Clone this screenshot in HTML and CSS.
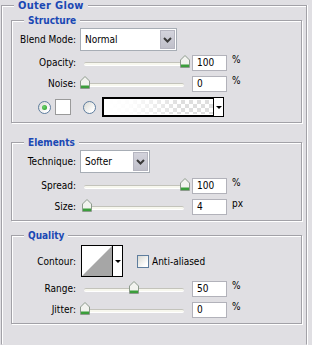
FILE: index.html
```html
<!DOCTYPE html>
<html>
<head>
<meta charset="utf-8">
<link rel="stylesheet" href="styles.css">
</head>
<body>
<fieldset class="group outer">
  <legend class="title title-main">Outer Glow</legend>

  <fieldset class="group inner structure">
    <legend class="title">Structure</legend>
    <div class="row row-select">
      <span class="label">Blend Mode:</span>
      <div class="select select-blend">
        <span class="select-text">Normal</span>
        <span class="select-btn"><svg width="9" height="6" viewBox="0 0 9 6"><path d="M1 1 L4.5 4.5 L8 1" fill="none" stroke="#3a3a3a" stroke-width="2"/></svg></span>
      </div>
    </div>
    <div class="row row-slider first-slider">
      <span class="label">Opacity:</span>
      <div class="slider"><div class="track"></div>
        <svg class="thumb" style="left:100px" width="10" height="13" viewBox="0 0 10 13"><path d="M0.5 5 L5 0.5 L9.5 5 V12.5 H0.5 Z" fill="#f2f3ef" stroke="#8c9a8c"/><rect x="1" y="9.5" width="8" height="2.5" fill="#3b9e3b"/></svg>
      </div>
      <div class="num">100</div><span class="unit">%</span>
    </div>
    <div class="row row-slider">
      <span class="label">Noise:</span>
      <div class="slider"><div class="track"></div>
        <svg class="thumb" style="left:0px" width="10" height="13" viewBox="0 0 10 13"><path d="M0.5 5 L5 0.5 L9.5 5 V12.5 H0.5 Z" fill="#f2f3ef" stroke="#8c9a8c"/><rect x="1" y="9.5" width="8" height="2.5" fill="#3b9e3b"/></svg>
      </div>
      <div class="num">0</div><span class="unit">%</span>
    </div>
    <div class="row row-color">
      <span class="radio checked"></span>
      <span class="swatch"></span>
      <span class="radio radio-2"></span>
      <div class="gradient">
        <span class="gradient-fill"></span>
        <span class="drop"><span class="tri"></span></span>
      </div>
    </div>
  </fieldset>

  <fieldset class="group inner elements">
    <legend class="title">Elements</legend>
    <div class="row row-select">
      <span class="label">Technique:</span>
      <div class="select select-tech">
        <span class="select-text">Softer</span>
        <span class="select-btn"><svg width="9" height="6" viewBox="0 0 9 6"><path d="M1 1 L4.5 4.5 L8 1" fill="none" stroke="#3a3a3a" stroke-width="2"/></svg></span>
      </div>
    </div>
    <div class="row row-slider first-slider">
      <span class="label">Spread:</span>
      <div class="slider"><div class="track"></div>
        <svg class="thumb" style="left:100px" width="10" height="13" viewBox="0 0 10 13"><path d="M0.5 5 L5 0.5 L9.5 5 V12.5 H0.5 Z" fill="#f2f3ef" stroke="#8c9a8c"/><rect x="1" y="9.5" width="8" height="2.5" fill="#3b9e3b"/></svg>
      </div>
      <div class="num">100</div><span class="unit">%</span>
    </div>
    <div class="row row-slider">
      <span class="label">Size:</span>
      <div class="slider"><div class="track"></div>
        <svg class="thumb" style="left:2px" width="10" height="13" viewBox="0 0 10 13"><path d="M0.5 5 L5 0.5 L9.5 5 V12.5 H0.5 Z" fill="#f2f3ef" stroke="#8c9a8c"/><rect x="1" y="9.5" width="8" height="2.5" fill="#3b9e3b"/></svg>
      </div>
      <div class="num">4</div><span class="unit">px</span>
    </div>
  </fieldset>

  <fieldset class="group inner quality">
    <legend class="title">Quality</legend>
    <div class="row row-contour">
      <span class="label">Contour:</span>
      <div class="contour">
        <svg class="contour-curve" width="30" height="30" viewBox="0 0 30 30"><rect width="30" height="30" fill="#fff"/><polygon points="0,30 30,0 30,30" fill="#a6a6a6"/></svg>
        <span class="drop drop-contour"><span class="tri"></span></span>
      </div>
      <span class="check"></span>
      <span class="check-label">Anti-aliased</span>
    </div>
    <div class="row row-slider first-slider">
      <span class="label">Range:</span>
      <div class="slider"><div class="track"></div>
        <svg class="thumb" style="left:49px" width="10" height="13" viewBox="0 0 10 13"><path d="M0.5 5 L5 0.5 L9.5 5 V12.5 H0.5 Z" fill="#f2f3ef" stroke="#8c9a8c"/><rect x="1" y="9.5" width="8" height="2.5" fill="#3b9e3b"/></svg>
      </div>
      <div class="num">50</div><span class="unit">%</span>
    </div>
    <div class="row row-slider">
      <span class="label">Jitter:</span>
      <div class="slider"><div class="track"></div>
        <svg class="thumb" style="left:0px" width="10" height="13" viewBox="0 0 10 13"><path d="M0.5 5 L5 0.5 L9.5 5 V12.5 H0.5 Z" fill="#f2f3ef" stroke="#8c9a8c"/><rect x="1" y="9.5" width="8" height="2.5" fill="#3b9e3b"/></svg>
      </div>
      <div class="num">0</div><span class="unit">%</span>
    </div>
  </fieldset>
</fieldset>
</body>
</html>
```
FILE: styles.css
```css
* { box-sizing: border-box; }
html, body { margin: 0; padding: 0; }
body {
  background: #e0dfe3;
  font-family: "DejaVu Sans Condensed", "DejaVu Sans", sans-serif;
  font-size: 10px;
  color: #000;
  width: 312px;
  height: 345px;
  overflow: hidden;
}

.group {
  border: 1px solid #a2a1a7;
  box-shadow: inset 1px 1px 0 #fff, 1px 1px 0 #fff;
  margin: 0;
  padding: 0;
  min-width: 0;
}
.outer {
  margin-left: 1px;
  width: 306px;
  height: 345px;
  border-bottom-color: transparent;
  box-shadow: inset 1px 1px 0 #fff, 1px 0 0 #fff;
}
.inner {
  margin: 0 4px 0 9px;
}
.structure { margin-top: 4px; padding-bottom: 5px; }
.elements { margin-top: 14px; padding-bottom: 3px; }
.quality { margin-top: 9px; padding-bottom: 3px; }

.title {
  color: #1a48b4;
  font-weight: bold;
  font-size: 10px;
  line-height: 11px;
  height: 11px;
  padding: 0 4px;
  margin-left: 12px;
  background: #e0dfe3;
}
.title-main {
  font-size: 11px;
  letter-spacing: 0.3px;
}

.row {
  display: flex;
  align-items: center;
}
.label {
  width: 64px;
  text-align: right;
  flex: none;
}
.row-select { height: 23px; margin-top: 2px; }
.row-slider { height: 21px; }
.structure .first-slider { margin-top: 1px; }
.elements .first-slider { margin-top: 2px; }
.quality .first-slider { margin-top: 1px; }
.row-slider .label { line-height: 12px; }

.select {
  margin-left: 4px;
  height: 23px;
  background: #fff;
  border: 1px solid #a7adb5;
  display: flex;
  align-items: center;
  padding: 1px;
}
.select-blend { width: 97px; }
.select-tech { width: 70px; }
.select-text {
  flex: 1;
  padding-left: 3px;
}
.select-btn {
  width: 15px;
  height: 19px;
  background: linear-gradient(#d3d3dc, #c0c0ca);
  border: 1px solid #b5b5c0;
  display: flex;
  align-items: center;
  justify-content: center;
}

.slider {
  position: relative;
  width: 110px;
  height: 21px;
  margin-left: 4px;
  flex: none;
}
.track {
  margin: 10px 6px 0 4px;
  height: 4px;
  border-radius: 2px;
  background: #f7f7ee;
  border-top: 1px solid #c3c3bb;
  border-bottom: 1px solid #fff;
}
.thumb {
  position: absolute;
  top: 3px;
  display: block;
}

.num {
  margin-left: 2px;
  width: 35px;
  height: 16px;
  background: #fff;
  border: 1px solid #b2b2ba;
  padding-left: 4px;
  line-height: 14px;
  flex: none;
}
.unit {
  margin-left: 5px;
  line-height: 10px;
  align-self: flex-start;
  margin-top: 3px;
}

.row-color {
  height: 20px;
  margin-top: 3px;
  padding-left: 26px;
}
.radio {
  width: 13px;
  height: 13px;
  border-radius: 50%;
  border: 1px solid #5e7d9e;
  background: linear-gradient(135deg, #d9d9d3, #fff 80%);
  display: flex;
  align-items: center;
  justify-content: center;
  flex: none;
}
.radio.checked::after {
  content: "";
  width: 5px;
  height: 5px;
  border-radius: 50%;
  background: radial-gradient(circle at 40% 40%, #6fd36f, #1f9a1f);
}
.radio-2 { margin-left: 12px; }
.swatch {
  margin-left: 4px;
  width: 16px;
  height: 16px;
  background: #fff;
  border: 1px solid #9a9a9a;
  flex: none;
}
.gradient {
  margin-left: 6px;
  width: 122px;
  height: 20px;
  border: 1px solid #000;
  box-shadow: inset 0 0 0 1px #000;
  display: flex;
  padding: 2px 0 2px 2px;
  background: #fff;
}
.gradient-fill {
  flex: 1;
  background:
    linear-gradient(to right, #fff 0%, rgba(255,255,255,0.9) 25%, rgba(255,255,255,0) 70%),
    conic-gradient(#dedede 25%, #fff 0 50%, #dedede 0 75%, #fff 0) 0 0 / 8px 8px;
}
.drop {
  width: 10px;
  border-left: 1px solid #000;
  background: #fff;
  display: flex;
  align-items: center;
  justify-content: center;
  margin: -2px 0;
}
.tri {
  width: 0;
  height: 0;
  border-left: 3px solid transparent;
  border-right: 3px solid transparent;
  border-top: 3px solid #000;
}

.row-contour {
  height: 32px;
  margin-top: 4px;
}
.contour {
  margin-left: 5px;
  width: 42px;
  height: 32px;
  border: 1px solid #000;
  display: flex;
  flex: none;
}
.contour-curve { display: block; }
.drop-contour { margin: 0; flex: 1; }
.check {
  margin-left: 14px;
  width: 12px;
  height: 13px;
  border: 1px solid #5e7d9e;
  background: linear-gradient(135deg, #d9d9d3, #fff 80%);
  flex: none;
}
.check-label { margin-left: 3px; }
```
